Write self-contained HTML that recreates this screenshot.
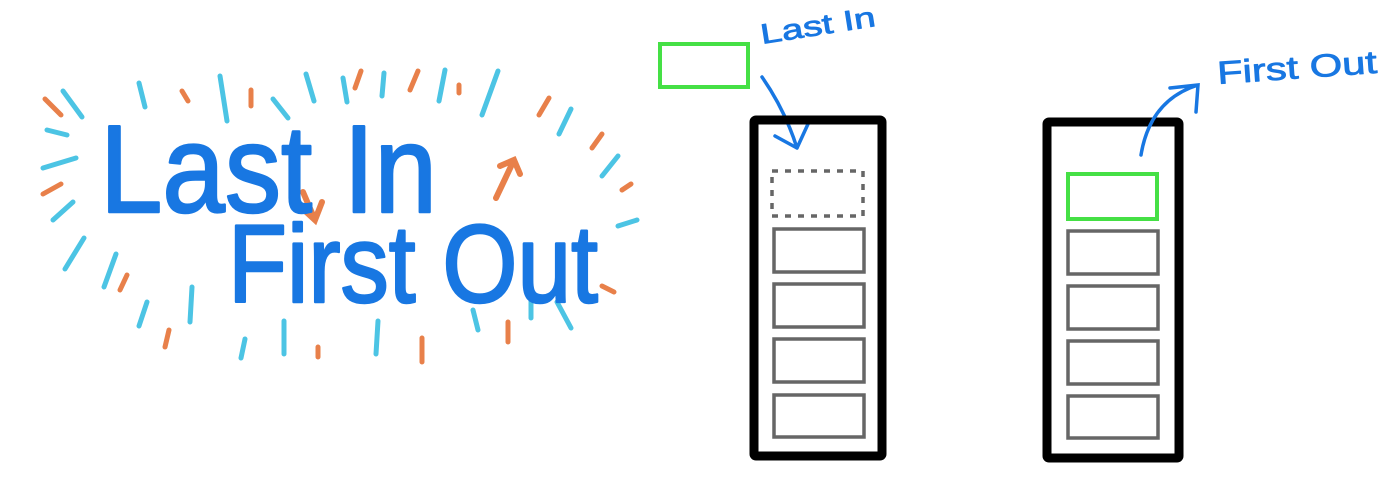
<!DOCTYPE html>
<html><head><meta charset="utf-8"><style>
html,body{margin:0;padding:0;background:#fff;width:1400px;height:484px;overflow:hidden}
svg{display:block}
text{font-family:"Liberation Sans","DejaVu Sans",sans-serif;fill:#1877e2;stroke:#1877e2;stroke-linejoin:round}
</style></head><body>
<svg width="1400" height="484" viewBox="0 0 1400 484" xmlns="http://www.w3.org/2000/svg">
<g stroke-linecap="round" fill="none" stroke-width="5">
<g stroke="#4cc4e4">
<path d="M63 91L82 117M139 83L145 107M220 76L227 121M273 99L288 118M306 74L314 101M343 78L347 102M384 73L382 96M445 70L439 101M498 71L482 115M571 109L559 134M618 156L602 176M637 220L618 226M47 130L67 135M43 168L76 158M73 202L53 220M84 238L65 269M116 254L104 287M147 302L139 326M192 287L190 322M245 339L241 358M284 321L284 354M378 321L376 354M473 310L478 330M531 298L531 318M557 302L571 328"/>
</g>
<g stroke="#e8804a">
<path d="M45 99L61 115M182 91L188 101M251 90L251 106M361 71L355 88M418 71L410 90M459 85L459 93M549 98L539 115M602 134L592 148M631 184L622 190M602 286L614 292M61 184L43 194M127 275L120 290M169 330L165 347M318 347L318 357M422 338L422 362M508 322L508 342"/>
<path d="M303 192L315 220M302 208L315 220L322 202" stroke-width="6"/>
<path d="M496 198L514 160M500 166L514 160L520 174" stroke-width="6"/>
</g>
</g>
<text x="100" y="212" font-size="124" stroke-width="2.5" textLength="337" lengthAdjust="spacingAndGlyphs">Last In</text>
<text x="228" y="302" font-size="110" stroke-width="2.5" textLength="370" lengthAdjust="spacingAndGlyphs">First Out</text>

<rect x="660" y="44" width="88" height="43" fill="none" stroke="#45e045" stroke-width="4"/>
<text x="762" y="44" font-size="28" stroke-width="0.8" transform="rotate(-9 762 44)" textLength="116" lengthAdjust="spacingAndGlyphs">Last In</text>
<path d="M762 77 Q785 110 797 148 M775 136 L797 148 L808 124" fill="none" stroke="#1877e2" stroke-width="3.5" stroke-linecap="round" stroke-linejoin="round"/>
<rect x="754" y="120" width="128" height="336" fill="none" stroke="#000" stroke-width="9" rx="2"/>
<rect x="772" y="171" width="91" height="45" fill="none" stroke="#666" stroke-width="3.5" stroke-dasharray="6 7"/>
<g fill="none" stroke="#666" stroke-width="3.5">
<rect x="774" y="229" width="90" height="43"/>
<rect x="774" y="284" width="90" height="43"/>
<rect x="774" y="339" width="90" height="43"/>
<rect x="774" y="395" width="90" height="42"/>
<rect x="1068" y="231" width="90" height="43"/>
<rect x="1068" y="286" width="90" height="43"/>
<rect x="1068" y="341" width="90" height="43"/>
<rect x="1068" y="396" width="90" height="42"/>
</g>
<rect x="1068" y="174" width="89" height="45" fill="none" stroke="#45e045" stroke-width="4"/>
<rect x="1047" y="122" width="132" height="336" fill="none" stroke="#000" stroke-width="9" rx="2"/>
<path d="M1141 155 Q1150 100 1198 85 M1170 88 L1198 85 L1196 112" fill="none" stroke="#1877e2" stroke-width="3.5" stroke-linecap="round"/>
<text x="1218" y="84" font-size="32" stroke-width="0.8" transform="rotate(-4 1218 84)" textLength="160" lengthAdjust="spacingAndGlyphs">First Out</text>
</svg>
</body></html>
